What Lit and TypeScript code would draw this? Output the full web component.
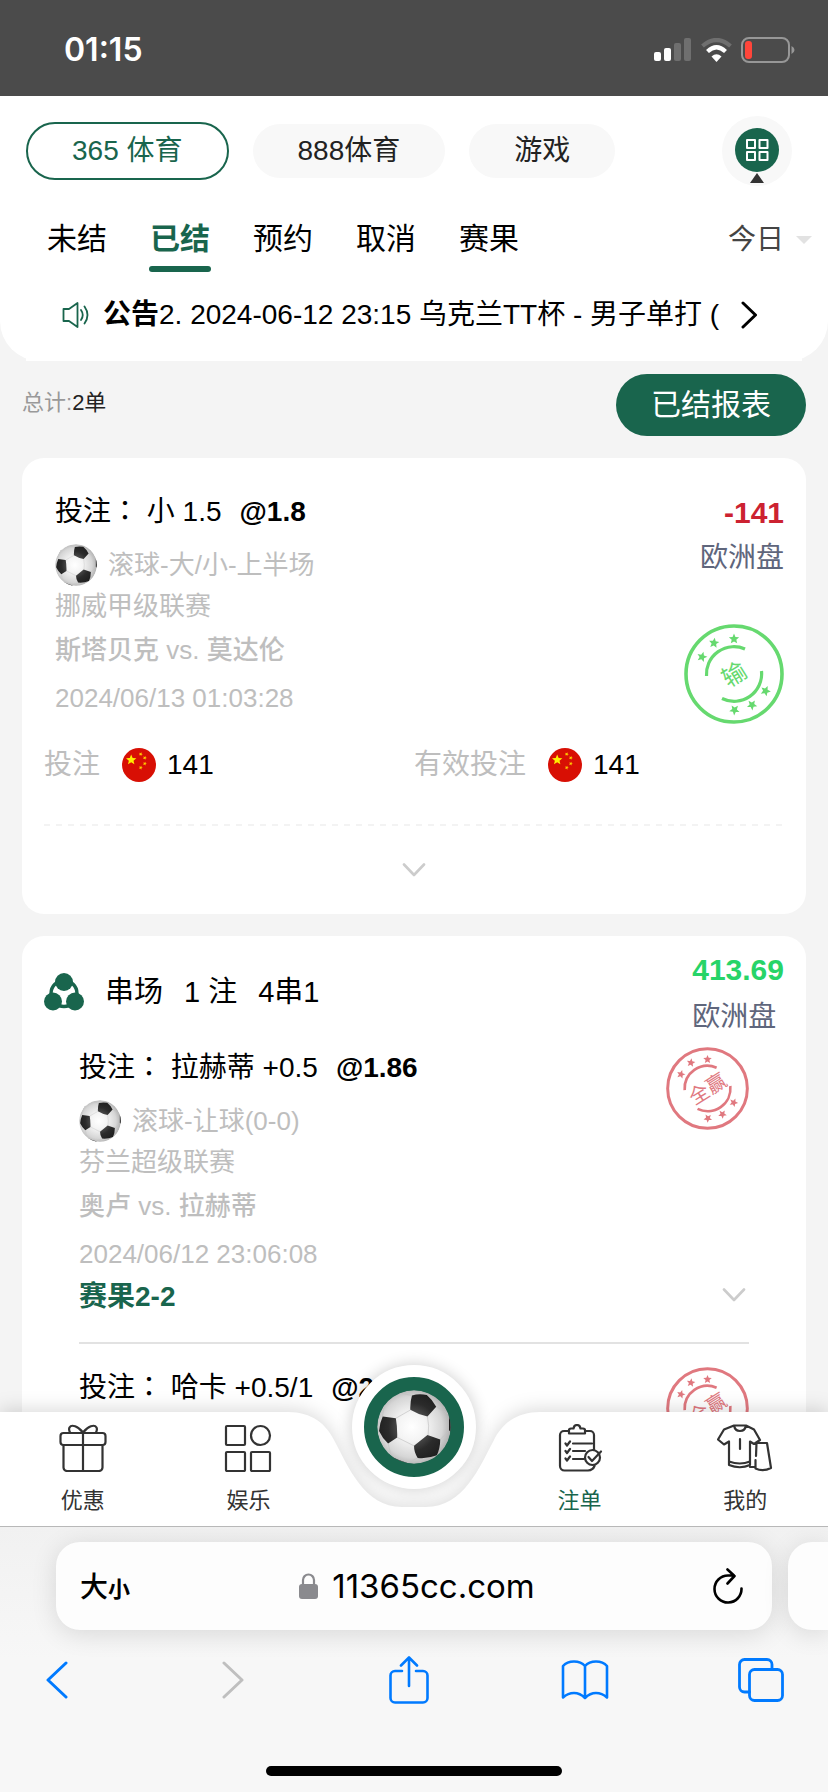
import { LitElement, html, svg, css, nothing } from "lit";
import { customElement, property, state } from "lit/decorators.js";
import { classMap } from "lit/directives/class-map.js";

const starPoints = (cx: number, cy: number, r: number, turn = 0): string =>
  Array.from({ length: 10 }, (_, i) => {
    const radius = i % 2 ? r * 0.45 : r;
    const a = ((i * 36 - 90 + turn) * Math.PI) / 180;
    return `${(cx + radius * Math.cos(a)).toFixed(2)},${(cy + radius * Math.sin(a)).toFixed(2)}`;
  }).join(" ");

@customElement("soccer-ball")
class SoccerBall extends LitElement {
  static styles = css`
    :host { display: block; }
    svg { display: block; width: 100%; height: 100%; }
  `;
  render() {
    return html`<svg viewBox="0 0 220 220" aria-hidden="true">
      <defs>
        <radialGradient id="skin" cx="0.47" cy="0.5" r="0.55">
          <stop offset="0" stop-color="#ffffff" />
          <stop offset="0.35" stop-color="#f4f4f4" />
          <stop offset="0.75" stop-color="#d6d6d6" />
          <stop offset="1" stop-color="#a9a9a9" />
        </radialGradient>
        <radialGradient id="patch" gradientUnits="userSpaceOnUse" cx="105" cy="110" r="110">
          <stop offset="0.3" stop-color="#555555" />
          <stop offset="0.65" stop-color="#2b2b2b" />
          <stop offset="1" stop-color="#1e1e1e" />
        </radialGradient>
        <clipPath id="edge"><circle cx="110" cy="110" r="109" /></clipPath>
      </defs>
      <g clip-path="url(#edge)">
        <circle cx="110" cy="110" r="110" fill="url(#skin)" />
        <path d="M60 141 110 166M56 84 100 59M150 79Q156 106 152 134M176 49 213 72M188 147 212 124M33 159 42 196M121 202 92 216M103 16 64 8M16 79 22 44" fill="none" stroke="#c2c2c2" stroke-width="2" />
        <path d="M104 16Q126 10 148 15Q166 30 176 50L150 79Q124 74 99 59Q98 36 104 16ZM17 79 56 84Q61 112 60 141L33 159Q16 144 6 122Q8 98 17 79ZM150 134 188 147Q188 172 178 194Q150 205 121 202Q110 186 110 166ZM214 72 222 66V126L214 120ZM22 44Q38 18 64 6L50 -4 10 30ZM42 198Q66 210 92 218L90 226 40 210Z" fill="url(#patch)" />
      </g>
    </svg>`;
  }
}

@customElement("result-stamp")
class ResultStamp extends LitElement {
  @property() label = "";
  @property() outcome = "win";
  static styles = css`
    :host { display: block; }
    svg { display: block; width: 100%; height: 100%; }
    .lose { color: #66d96f; }
    .win { color: #e0787f; }
    .word {
      font-family: "Noto Sans CJK SC", sans-serif;
      font-size: 24px;
      fill: currentColor;
    }
  `;
  render() {
    const stars = [[50, 15], [30, 19], [18, 33], [81.5, 67], [68, 81], [50.5, 86]];
    return html`<svg class=${this.outcome} viewBox="0 0 100 100" role="img" aria-label=${this.label}>
      <circle cx="50" cy="50" r="48" fill="none" stroke="currentColor" stroke-width="3.6" />
      <path d="M22.5 52A27.5 27.5 0 0 1 61 25M77.5 47A27.5 27.5 0 0 1 38 74.5" fill="none" stroke="currentColor" stroke-width="3.2" />
      ${stars.map(([x, y], i) => svg`<polygon points=${starPoints(x, y, 5.4, i * 8)} fill="currentColor" />`)}
      <text class="word" x="50" y="59" text-anchor="middle" transform="rotate(-32 50 50)">${this.label}</text>
    </svg>`;
  }
}

@customElement("china-flag")
class ChinaFlag extends LitElement {
  static styles = css`
    :host { display: block; width: 34px; height: 34px; }
    svg { display: block; }
  `;
  render() {
    return html`<svg width="34" height="34" viewBox="0 0 100 100" aria-hidden="true">
      <circle cx="50" cy="50" r="50" fill="#d80f04" />
      <polygon points=${starPoints(27, 35, 16)} fill="#ffee00" />
      ${[[55, 18], [67, 29], [67, 46], [55, 58]].map(([x, y]) => svg`<polygon points=${starPoints(x, y, 6, 20)} fill="#ffcf00" />`)}
    </svg>`;
  }
}

interface Bet {
  pick: string;
  odds: string;
  market?: string;
  league?: string;
  home?: string;
  away?: string;
  time?: string;
  score?: string;
}

const single: Bet = {
  pick: "小 1.5", odds: "@1.8", market: "滚球-大/小-上半场", league: "挪威甲级联赛",
  home: "斯塔贝克", away: "莫达伦", time: "2024/06/13 01:03:28",
};

const legs: Bet[] = [
  {
    pick: "拉赫蒂 +0.5", odds: "@1.86", market: "滚球-让球(0-0)", league: "芬兰超级联赛",
    home: "奥卢", away: "拉赫蒂", time: "2024/06/12 23:06:08", score: "赛果2-2",
  },
  { pick: "哈卡 +0.5/1", odds: "@2" },
];

const giftIcon = svg`<rect x="1.5" y="9" width="45" height="12" rx="3"/><path d="M4.500 21V43.500a3.500 3.500 0 0 0 3.500 3.500H40a3.500 3.500 0 0 0 3.500-3.500V21M24 9V47M24 8.500C19 2 12.500 0 10.500 3.500C9.500 5.500 10.500 7.500 11 8.500M24 8.500C29 2 35.500 0 37.500 3.500C38.500 5.500 37.500 7.500 37 8.500"/>`;
const gamesIcon = svg`<rect x="2" y="2" width="19" height="19" rx="1"/><circle cx="36.500" cy="11.500" r="9.500"/><rect x="2" y="28" width="19" height="19" rx="1"/><rect x="27" y="28" width="19" height="19" rx="1"/>`;
const slipIcon = svg`<path d="M13 7H8a4 4 0 0 0-4 4v31a4.500 4.500 0 0 0 4.500 4.500H32Q37 46 38.500 42M38 26V11a4 4 0 0 0-4-4h-5M13 9.500V6q0-1.500 2-1.500h2.500Q18 1 21 1t3.500 3.500H27q2 0 2 1.500v3.500ZM17 19.500H36M17 27H29M17 35H28M9.500 19.500l1.500 2 3-4M9.500 27l1.500 2 3-4M9.500 34.500l1.500 2 3-4"/><circle cx="36.500" cy="33.500" r="7.500"/><path d="M32.500 33l3.500 4L45 27.500"/>`;
const shirtIcon = svg`<path d="M17 1.500 7 5.500 1 15.500l6 5 5-3V41Q23 45.500 33 41V17.500l4 2.500 6-4L37 5.500 29 1.500ZM17 1.500q1 5.500 6 5.500t6-5.500M23 15v10M12 37.500Q23 41.500 33 37.500M33 43H37M39.500 19H50L54 44Q46 48 38.500 44.500V36M39.500 19 39 32"/>`;

@customElement("app-root")
class AppRoot extends LitElement {
  @state() private filter = "已结";

  static styles = css`
    :host {
      display: flex;
      flex-direction: column;
      height: 100vh;
      overflow: hidden;
      background: #f4f4f4;
      color: #000;
      font-family: "Liberation Sans", "Noto Sans CJK SC", sans-serif;
      font-size: 28px;
      line-height: 40px;
    }
    * { box-sizing: border-box; }
    button, select {
      margin: 0;
      padding: 0;
      border: 0;
      background: none;
      color: inherit;
      font: inherit;
      appearance: none;
      cursor: pointer;
    }
    a { color: inherit; text-decoration: none; }
    svg { display: block; flex: none; }
    .line { fill: none; stroke: currentColor; stroke-linecap: round; stroke-linejoin: round; }

    .status {
      flex: none;
      display: flex;
      align-items: center;
      justify-content: space-between;
      height: 96px;
      padding: 4px 33px 0 64px;
      background: #4b4b4b;
      color: #fff;
    }
    .clock { font: 600 32px/40px Inter, sans-serif; }
    .signals { display: flex; align-items: center; gap: 9px; }

    .header {
      flex: none;
      padding-top: 20px;
      background: #fff;
      border-radius: 0 0 40px 40px;
    }
    .brands {
      display: flex;
      align-items: center;
      gap: 24px;
      height: 70px;
      padding: 0 36px 0 26px;
    }
    .pill {
      height: 54px;
      padding: 0 45px;
      border-radius: 29px;
      background: #f8f8f8;
      color: #222;
      white-space: nowrap;
    }
    .pill.on {
      height: 58px;
      padding: 0 44px;
      border: 2px solid #19654d;
      background: #fff;
      color: #19654d;
    }
    .apps {
      display: flex;
      flex-direction: column;
      align-items: center;
      gap: 1px;
      width: 70px;
      height: 70px;
      margin-left: auto;
      padding-top: 12px;
      border-radius: 50%;
      background: #f8f8f8;
    }
    .filters {
      display: flex;
      align-items: flex-start;
      gap: 43px;
      margin-top: 35px;
      padding: 0 16px 0 47px;
      font-size: 30px;
      line-height: 36px;
    }
    .filter {
      display: flex;
      flex-direction: column;
      align-items: center;
      gap: 9px;
      width: 60px;
      white-space: nowrap;
    }
    .filter.on { color: #19654d; font-weight: 700; }
    .filter.on::after {
      content: "";
      width: 62px;
      height: 6px;
      border-radius: 3px;
      background: #19654d;
    }
    .day {
      display: flex;
      align-items: center;
      gap: 12px;
      margin-left: auto;
      color: #444;
      font-size: 28px;
    }
    .day select { width: 56px; height: 38px; }
    .notice {
      display: flex;
      align-items: center;
      margin: 0 26px;
      padding: 23px 44px 26px 36px;
      background: #fff;
    }
    .notice-text {
      flex: 1;
      min-width: 0;
      margin: 0 20px 0 13px;
      overflow: hidden;
      white-space: nowrap;
    }

    .content {
      position: relative;
      flex: 1;
      min-height: 0;
      display: flex;
      flex-direction: column;
      overflow: hidden;
    }
    .summary {
      flex: none;
      display: flex;
      align-items: center;
      justify-content: space-between;
      padding: 13px 22px 22px;
      color: #222;
      font-size: 22px;
    }
    .total { padding-bottom: 4px; }
    .muted { color: #999; }
    .report {
      height: 62px;
      padding: 0 35px;
      border-radius: 31px;
      background: #19654d;
      color: #fff;
      font-size: 30px;
    }
    .card {
      flex: none;
      margin: 0 22px 22px;
      padding: 0 22px;
      border-radius: 22px;
      background: #fff;
    }
    .card.grow { flex: 1 0 auto; margin-bottom: 0; }
    .body { display: flex; justify-content: space-between; }
    .body > .bet { padding: 34px 0 0 11px; }
    .result {
      display: flex;
      flex-direction: column;
      align-items: flex-end;
      padding-top: 35px;
    }
    .amount { font-size: 30px; font-weight: 700; }
    .loss { color: #cc2231; }
    .gain { color: #27d468; }
    .odds-type { height: 50px; color: #5f667c; line-height: 50px; }
    .stamp-large { width: 100px; height: 100px; margin-top: 41px; }
    .stamp { width: 83px; height: 83px; }

    .title { display: flex; gap: 18px; height: 40px; white-space: nowrap; }
    .colon { font-family: "Noto Sans CJK TC", sans-serif; line-height: 1; }
    .market { display: flex; align-items: center; gap: 11px; margin-top: 12px; }
    .ball { width: 42px; height: 42px; }
    .info { color: #bebebe; font-size: 26px; line-height: 36px; }
    .league, .teams, .time { height: 36px; }
    .league { margin-top: 2px; }
    .teams { margin-top: 8px; }
    .teams b { font-weight: 500; }
    .time { margin-top: 12px; }
    .score { height: 40px; margin-top: 5px; color: #19654d; font-weight: 700; }

    .stakes {
      display: grid;
      grid-template-columns: 1fr 1fr;
      margin: 24px 0 0;
      padding-bottom: 42px;
      line-height: 34px;
    }
    .stake { display: flex; align-items: center; height: 34px; }
    .stake dt { margin-right: 22px; color: #bebebe; }
    .stake dd { display: flex; gap: 11px; margin: 0; }
    .dashes {
      height: 2px;
      background: repeating-linear-gradient(90deg, #f3f3f3 0 6px, #fff 6px 12px);
    }
    .expand {
      display: flex;
      align-items: center;
      justify-content: center;
      width: 100%;
      height: 88px;
      color: #ccc;
    }

    .parlay-head {
      display: flex;
      align-items: center;
      justify-content: space-between;
      padding-top: 14px;
    }
    .parlay-name {
      display: flex;
      align-items: center;
      gap: 21px;
      padding-bottom: 8px;
      font-size: 29px;
    }
    .parlay-result .amount { height: 42px; }
    .leg {
      display: flex;
      justify-content: space-between;
      margin: 0 35px;
      padding: 23px 0 25px;
      border-bottom: 2px solid #e2e2e2;
    }
    .leg > .bet { padding-top: 1px; }
    .leg:first-of-type { padding-top: 5px; }
    .leg:last-of-type { border-bottom: 0; }
    .leg-side {
      display: flex;
      flex-direction: column;
      justify-content: space-between;
      align-items: flex-end;
      padding-bottom: 6px;
    }
    .leg-open {
      display: flex;
      align-items: center;
      justify-content: flex-end;
      width: 40px;
      height: 32px;
      padding-right: 3px;
      color: #ccc;
    }

    .tabbar { position: absolute; left: 0; right: 0; bottom: 0; height: 114px; }
    .tabbar-shape {
      position: absolute;
      inset: 0;
      display: grid;
      grid-template-columns: 1fr 280px 1fr;
      filter: drop-shadow(0 -3px 9px rgba(0, 0, 0, 0.14));
    }
    .flat { background: #fff; }
    .tabs {
      position: relative;
      display: grid;
      grid-template-columns: repeat(5, 1fr);
      height: 114px;
    }
    .tab {
      display: flex;
      flex-direction: column;
      align-items: center;
      gap: 13px;
      padding-top: 12px;
      color: #333;
      font-size: 22px;
      line-height: 32px;
    }
    .tab-name.on { color: #19654d; }
    .home {
      justify-self: center;
      display: flex;
      align-items: center;
      justify-content: center;
      width: 124px;
      height: 124px;
      margin-top: -47px;
      border: 12px solid #fff;
      border-radius: 50%;
      background: #19654d;
      box-shadow: 0 0 16px rgba(0, 0, 0, 0.2);
    }
    .home-ball { width: 74px; height: 74px; }

    .browser {
      flex: none;
      position: relative;
      padding: 15px 0 16px;
      border-top: 1px solid #b8b8b8;
      background: linear-gradient(#f1f1f1, #f7f7f7 50%);
      overflow: hidden;
    }
    .address-row { display: flex; gap: 16px; padding-left: 56px; }
    .address {
      flex: 1;
      display: grid;
      grid-template-columns: 1fr auto 1fr;
      align-items: center;
      height: 88px;
      padding: 0 29px 0 24px;
      border-radius: 24px;
      background: #fdfdfd;
      box-shadow: 0 4px 26px rgba(0, 0, 0, 0.12);
    }
    .text-size { justify-self: start; padding-top: 5px; font-weight: 500; }
    .text-size small { font-size: 22px; font-weight: 700; }
    .url {
      display: flex;
      align-items: center;
      gap: 14px;
      padding-left: 11px;
      font: 400 33px/40px Inter, sans-serif;
    }
    .reload { justify-self: end; }
    .next-page {
      width: 40px;
      border-radius: 24px 0 0 24px;
      background: #fdfdfd;
      box-shadow: 0 4px 26px rgba(0, 0, 0, 0.12);
    }
    .tools {
      display: flex;
      justify-content: space-between;
      margin: 26px 43px 0 33px;
      color: #007aff;
    }
    .tool {
      display: flex;
      align-items: center;
      justify-content: center;
      width: 48px;
      height: 48px;
    }
    .tool:disabled { color: #bfbfbf; }
    .indicator {
      width: 296px;
      height: 10px;
      margin: 62px auto 0;
      border-radius: 5px;
      background: #000;
    }
  `;

  private chevron() {
    return html`<svg class="line" width="24" height="14" viewBox="0 0 24 14" stroke-width="2.600" aria-hidden="true"><path d="M2 1.500 12 12 22 1.500" /></svg>`;
  }

  private bet(b: Bet) {
    return html`<div class="bet">
      <div class="title"><span>投注<span class="colon">：</span> ${b.pick}</span><b>${b.odds}</b></div>
      ${b.market
        ? html`<div class="info market"><soccer-ball class="ball"></soccer-ball><span>${b.market}</span></div>
            <div class="info league">${b.league}</div>
            <div class="info teams"><b>${b.home}</b> vs. <b>${b.away}</b></div>
            <div class="info time">${b.time}</div>`
        : nothing}
      ${b.score ? html`<div class="score">${b.score}</div>` : nothing}
    </div>`;
  }

  private stake(name: string, value: string) {
    return html`<div class="stake"><dt>${name}</dt><dd><china-flag></china-flag><span>${value}</span></dd></div>`;
  }

  private tab(name: string, width: number, icon: unknown, on = false) {
    return html`<a class="tab" href="#">
      <svg class="line" width=${width} height="48" viewBox="0 0 ${width} 48" stroke-width="2.200" aria-hidden="true">${icon}</svg>
      <span class=${classMap({ "tab-name": true, on })}>${name}</span>
    </a>`;
  }

  render() {
    return html`
      <div class="status">
        <span class="clock">01:15</span>
        <div class="signals">
          <svg width="38" height="24" viewBox="0 0 38 24" fill="#fff" aria-hidden="true">
            <rect y="14" width="7" height="9" rx="2" /><rect x="10" y="10" width="7" height="13" rx="2" />
            <rect x="20" y="5" width="7" height="18" rx="2" opacity=".2" /><rect x="30" width="7" height="23" rx="2" opacity=".2" />
          </svg>
          <svg width="31" height="24" viewBox="0 0 31 24" fill="none" stroke="#fff" stroke-width="4.200" aria-hidden="true">
            <path d="M1.500 8Q15.500 -4 29.500 8" opacity=".2" /><path d="M6.500 13.500Q15.500 5 24.500 13.500" />
            <path d="M10.500 18.500Q15.500 14 20.500 18.500L15.500 24Z" fill="#fff" stroke="none" />
          </svg>
          <svg width="54" height="26" viewBox="0 0 54 26" aria-hidden="true">
            <rect x="1" y="1" width="47" height="24" rx="7" fill="none" stroke="#979797" stroke-width="2" />
            <rect x="4" y="4" width="7" height="18" rx="3" fill="#ff453a" /><path d="M50.500 9q3 1.500 3 4t-3 4Z" fill="#979797" />
          </svg>
        </div>
      </div>

      <header class="header">
        <div class="brands">
          <button class="pill on">365 体育</button>
          <button class="pill">888体育</button>
          <button class="pill">游戏</button>
          <button class="apps" aria-label="全部">
            <svg width="44" height="44" viewBox="0 0 44 44" aria-hidden="true">
              <circle cx="22" cy="22" r="22" fill="#19654d" />
              <path d="M12 12h8v8h-8ZM24.500 12h8v8h-8ZM12 24h8v8h-8ZM24.500 24h8v8h-8Z" fill="none" stroke="#fff" stroke-width="2" stroke-linejoin="round" />
            </svg>
            <svg width="14" height="10" viewBox="0 0 14 10" fill="#333" aria-hidden="true"><path d="M7 0 14 10H0Z" /></svg>
          </button>
        </div>
        <nav class="filters">
          ${["未结", "已结", "预约", "取消", "赛果"].map(
            (name) => html`<button class=${classMap({ filter: true, on: name === this.filter })} @click=${() => (this.filter = name)}>${name}</button>`
          )}
          <div class="day">
            <select aria-label="日期"><option>今日</option></select>
            <svg width="16" height="8" viewBox="0 0 16 8" fill="#e2e2e2" aria-hidden="true"><path d="M0 0H16L8 8Z" /></svg>
          </div>
        </nav>
        <div class="notice">
          <svg class="line" width="28" height="26" viewBox="0 0 28 26" color="#19654d" stroke-width="1.800" aria-hidden="true">
            <path d="M1.500 7H7L15.500 1V25L7 19H1.500ZM19 8Q22.500 13 19 18M22.500 4.500Q28.500 13 22.500 21.500" />
          </svg>
          <span class="notice-text"><b>公告</b>2. 2024-06-12 23:15 乌克兰TT杯 - 男子单打 (</span>
          <svg class="line" width="17" height="28" viewBox="0 0 17 28" stroke-width="3" aria-hidden="true"><path d="M2 2 14.500 14 2 26" /></svg>
        </div>
      </header>

      <main class="content">
        <div class="summary">
          <span class="total"><span class="muted">总计:</span>2单</span>
          <button class="report">已结报表</button>
        </div>

        <article class="card">
          <div class="body">
            ${this.bet(single)}
            <div class="result">
              <span class="amount loss">-141</span>
              <span class="odds-type">欧洲盘</span>
              <result-stamp class="stamp-large" label="输" outcome="lose"></result-stamp>
            </div>
          </div>
          <dl class="stakes">${this.stake("投注", "141")}${this.stake("有效投注", "141")}</dl>
          <div class="dashes"></div>
          <button class="expand" aria-label="展开">${this.chevron()}</button>
        </article>

        <article class="card grow">
          <div class="parlay-head">
            <div class="parlay-name">
              <svg width="40" height="38" viewBox="0 0 40 38" fill="#19654d" aria-hidden="true">
                <circle cx="20" cy="20.500" r="13" fill="none" stroke="#19654d" stroke-width="3.400" />
                <circle cx="20" cy="9" r="9" /><circle cx="9" cy="28.500" r="9" /><circle cx="31" cy="28.500" r="9" />
              </svg>
              <span>串场</span><span>1 注</span><span>4串1</span>
            </div>
            <div class="parlay-result">
              <div class="amount gain">413.69</div>
              <div class="odds-type">欧洲盘</div>
            </div>
          </div>
          ${legs.map(
            (leg) => html`<section class="leg">
              ${this.bet(leg)}
              <div class="leg-side">
                <result-stamp class="stamp" label="全赢" outcome="win"></result-stamp>
                ${leg.score ? html`<button class="leg-open" aria-label="展开">${this.chevron()}</button>` : nothing}
              </div>
            </section>`
          )}
        </article>

        <div class="tabbar">
          <div class="tabbar-shape">
            <div class="flat"></div>
            <svg width="280" height="114" viewBox="0 0 280 114" fill="#fff" aria-hidden="true">
              <path d="M0 0H14C38 0 52 12 60 28C74 54 90 95 128 95H152C190 95 206 54 220 28C228 12 242 0 266 0H280V114H0Z" />
            </svg>
            <div class="flat"></div>
          </div>
          <nav class="tabs">
            ${this.tab("优惠", 48, giftIcon)}
            ${this.tab("娱乐", 48, gamesIcon)}
            <a class="home" href="#" aria-label="体育"><soccer-ball class="home-ball"></soccer-ball></a>
            ${this.tab("注单", 48, slipIcon, true)}
            ${this.tab("我的", 56, shirtIcon)}
          </nav>
        </div>
      </main>

      <footer class="browser">
        <div class="address-row">
          <div class="address">
            <button class="text-size">大<small>小</small></button>
            <button class="url">
              <svg width="19" height="26" viewBox="0 0 19 26" aria-hidden="true">
                <rect y="11" width="19" height="15" rx="3" fill="#8a8a8e" /><path d="M4 12V7a5.500 5.500 0 0 1 11 0v5" fill="none" stroke="#8a8a8e" stroke-width="2.200" />
              </svg>
              <span>11365cc.com</span>
            </button>
            <button class="reload" aria-label="刷新">
              <svg class="line" width="30" height="36" viewBox="0 0 30 36" stroke-width="2.600" aria-hidden="true">
                <path d="M28.500 20.500A13.500 13.500 0 1 1 15 7.500H21M14.500 1.500 21.500 8 14.500 15.500" />
              </svg>
            </button>
          </div>
          <div class="next-page"></div>
        </div>
        <div class="tools">
          <button class="tool" aria-label="后退"><svg class="line" width="22" height="38" viewBox="0 0 22 38" stroke-width="3" aria-hidden="true"><path d="M20 2 2 19 20 36" /></svg></button>
          <button class="tool" aria-label="前进" disabled><svg class="line" width="22" height="38" viewBox="0 0 22 38" stroke-width="3" aria-hidden="true"><path d="M2 2 20 19 2 36" /></svg></button>
          <button class="tool" aria-label="分享"><svg class="line" width="40" height="48" viewBox="0 0 40 48" stroke-width="2.600" aria-hidden="true"><path d="M13 15H6a4.500 4.500 0 0 0-4.500 4.500V42A4.500 4.500 0 0 0 6 46.500H34a4.500 4.500 0 0 0 4.500-4.500V19.500A4.500 4.500 0 0 0 34 15H27M20 30V2M12 9.500 20 1.500 28 9.500" /></svg></button>
          <button class="tool" aria-label="书签"><svg class="line" width="48" height="40" viewBox="0 0 48 40" stroke-width="2.600" aria-hidden="true"><path d="M24 38V6Q20 1.500 13 1.500T2 6V37.500Q7 33 13 33T24 38Q29 33 35 33T46 37.500V6Q42 1.500 35 1.500T24 6" /></svg></button>
          <button class="tool" aria-label="标签页"><svg class="line" width="46" height="44" viewBox="0 0 46 44" stroke-width="2.800" aria-hidden="true"><path d="M11.500 34H6.500A5 5 0 0 1 1.500 29V6.500A5 5 0 0 1 6.500 1.500H29A5 5 0 0 1 34 6.500V11" /><rect x="11.500" y="11.500" width="33" height="31" rx="5" /></svg></button>
        </div>
        <div class="indicator"></div>
      </footer>
    `;
  }
}
